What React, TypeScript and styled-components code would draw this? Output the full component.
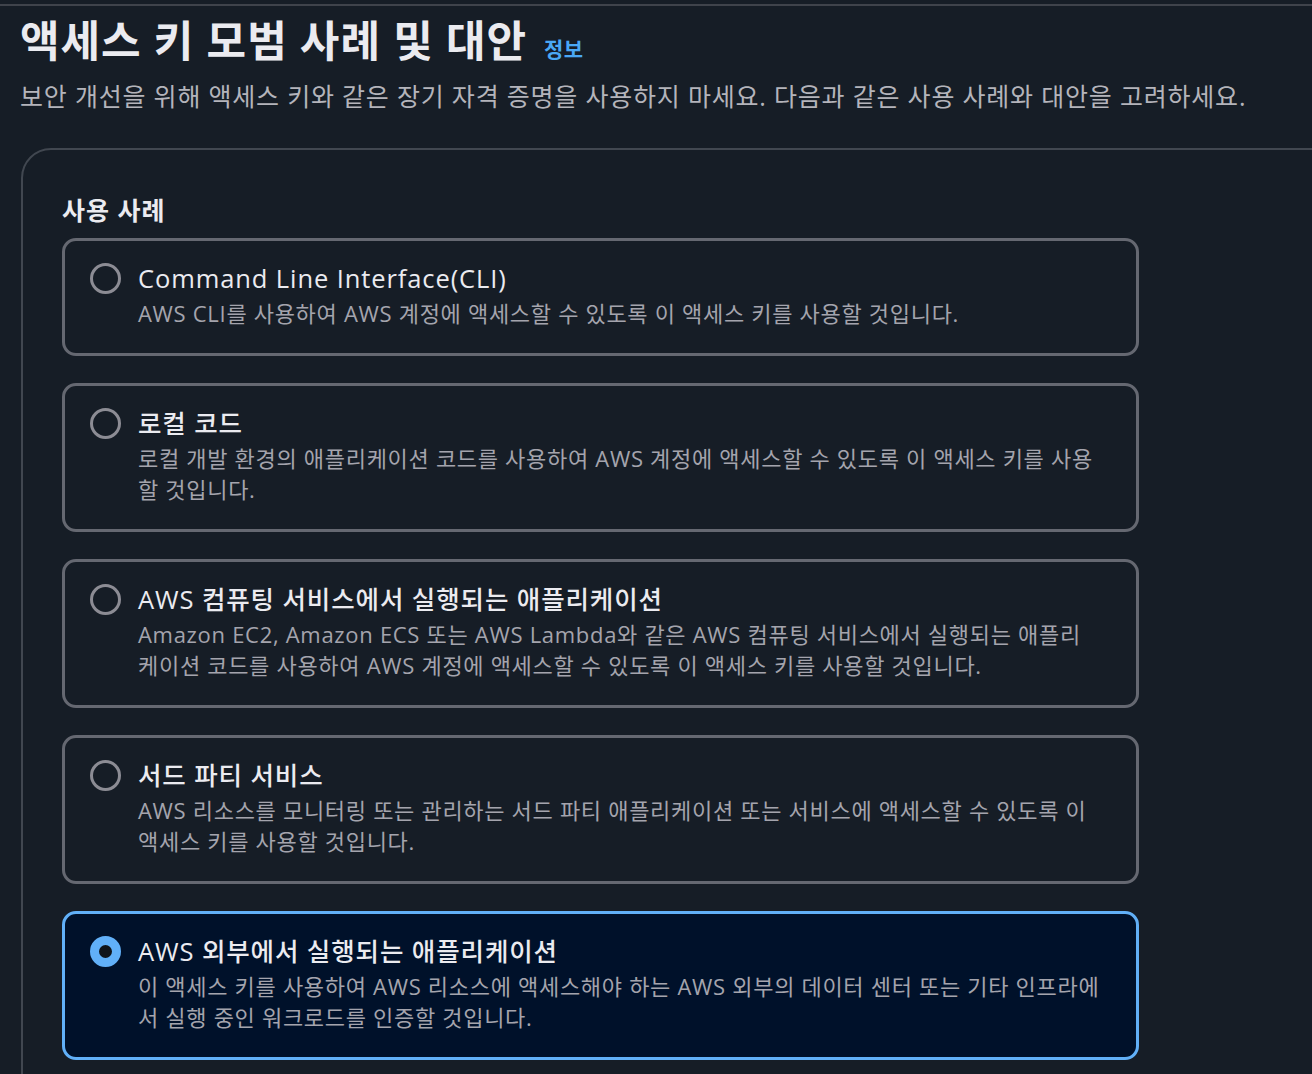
import { useState } from "react";
import styled, { createGlobalStyle } from "styled-components";

const GlobalStyle = createGlobalStyle`
  html, body {
    margin: 0;
    padding: 0;
    background: #161d26;
    overflow: hidden;
  }
  body {
    font-family: "Open Sans", "Noto Sans CJK KR", sans-serif;
    color: #ebebf0;
  }
`;

const Page = styled.div`
  width: 1312px;
  height: 1074px;
  padding-top: 4px;
  box-sizing: border-box;
  overflow: hidden;
`;

const TopRule = styled.div`
  height: 2px;
  background: #3f434b;
`;

const Header = styled.header`
  padding: 6px 20px 0;
`;

const TitleRow = styled.div`
  display: flex;
  align-items: baseline;
  gap: 17px;
`;

const Title = styled.h1`
  margin: 0;
  font-size: 43px;
  line-height: 58px;
  font-weight: 700;
  letter-spacing: 1px;
  color: #ebebf0;
`;

const InfoLink = styled.a`
  font-size: 21px;
  font-weight: 700;
  letter-spacing: 0.5px;
  color: #4aa8f5;
  text-decoration: none;
  cursor: pointer;
`;

const Description = styled.p`
  margin: 8px 0 0;
  font-size: 25px;
  line-height: 36px;
  letter-spacing: 0.8px;
  color: #b4b4bb;
`;

const Panel = styled.section`
  margin: 34px -80px 0 21px;
  border: 2px solid #414750;
  border-radius: 30px;
  padding: 43px 40px 40px 39px;
  min-height: 1000px;
`;

const SectionLabel = styled.h2`
  margin: 0 0 11px;
  font-size: 25px;
  line-height: 34px;
  font-weight: 700;
  letter-spacing: 1px;
  color: #ebebf0;
`;

const TileList = styled.div`
  display: flex;
  flex-direction: column;
  gap: 27px;
  width: 1077px;
`;

const Tile = styled.label<{ $selected: boolean }>`
  display: flex;
  gap: 17px;
  align-items: flex-start;
  border: 3px solid ${(p) => (p.$selected ? "#61b0f8" : "#656871")};
  background: ${(p) => (p.$selected ? "#00112a" : "transparent")};
  border-radius: 14px;
  padding: 20px 36px 24px 25px;
  cursor: pointer;
`;

const Radio = styled.span<{ $checked: boolean }>`
  flex: none;
  width: 31px;
  height: 31px;
  margin-top: 2px;
  box-sizing: border-box;
  border-radius: 50%;
  border: ${(p) => (p.$checked ? "9px solid #61b0f8" : "3px solid #8c8c94")};
  background: ${(p) => (p.$checked ? "#0f141a" : "transparent")};
`;

const TileText = styled.div`
  display: flex;
  flex-direction: column;
  gap: 3px;
  min-width: 0;
`;

const TileTitle = styled.span`
  font-size: 25.5px;
  line-height: 34px;
  font-weight: 500;
  letter-spacing: 0.9px;
  color: #ebebf0;
`;

const TileDesc = styled.span`
  font-size: 22px;
  line-height: 31px;
  letter-spacing: 0.7px;
  color: #a4a4ad;
`;

const options = [
  {
    id: "cli",
    title: "Command Line Interface(CLI)",
    desc: "AWS CLI를 사용하여 AWS 계정에 액세스할 수 있도록 이 액세스 키를 사용할 것입니다.",
  },
  {
    id: "local",
    title: "로컬 코드",
    desc: "로컬 개발 환경의 애플리케이션 코드를 사용하여 AWS 계정에 액세스할 수 있도록 이 액세스 키를 사용할 것입니다.",
  },
  {
    id: "compute",
    title: "AWS 컴퓨팅 서비스에서 실행되는 애플리케이션",
    desc: "Amazon EC2, Amazon ECS 또는 AWS Lambda와 같은 AWS 컴퓨팅 서비스에서 실행되는 애플리케이션 코드를 사용하여 AWS 계정에 액세스할 수 있도록 이 액세스 키를 사용할 것입니다.",
  },
  {
    id: "third",
    title: "서드 파티 서비스",
    desc: "AWS 리소스를 모니터링 또는 관리하는 서드 파티 애플리케이션 또는 서비스에 액세스할 수 있도록 이 액세스 키를 사용할 것입니다.",
  },
  {
    id: "outside",
    title: "AWS 외부에서 실행되는 애플리케이션",
    desc: "이 액세스 키를 사용하여 AWS 리소스에 액세스해야 하는 AWS 외부의 데이터 센터 또는 기타 인프라에서 실행 중인 워크로드를 인증할 것입니다.",
  },
];

export default function App() {
  const [selected, setSelected] = useState("outside");

  return (
    <Page>
      <GlobalStyle />
      <TopRule />
      <Header>
        <TitleRow>
          <Title>액세스 키 모범 사례 및 대안</Title>
          <InfoLink>정보</InfoLink>
        </TitleRow>
        <Description>
          보안 개선을 위해 액세스 키와 같은 장기 자격 증명을 사용하지 마세요. 다음과 같은 사용 사례와 대안을 고려하세요.
        </Description>
      </Header>
      <Panel>
        <SectionLabel>사용 사례</SectionLabel>
        <TileList>
          {options.map((o) => (
            <Tile
              key={o.id}
              $selected={selected === o.id}
              onClick={() => setSelected(o.id)}
            >
              <Radio $checked={selected === o.id} />
              <TileText>
                <TileTitle>{o.title}</TileTitle>
                <TileDesc>{o.desc}</TileDesc>
              </TileText>
            </Tile>
          ))}
        </TileList>
      </Panel>
    </Page>
  );
}
